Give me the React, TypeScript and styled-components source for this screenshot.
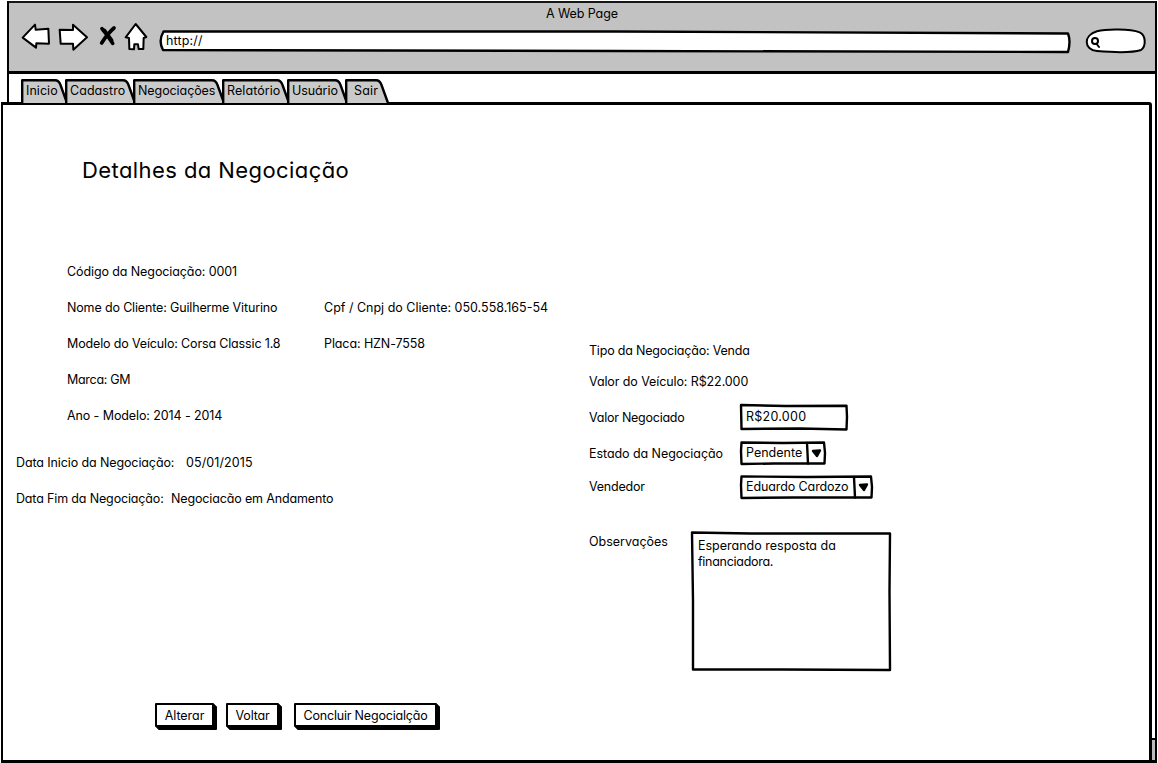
import React from "react";
import styled, { createGlobalStyle } from "styled-components";

const GlobalStyle = createGlobalStyle`
  * { box-sizing: border-box; }
  body {
    margin: 0;
    overflow: hidden;
    background: #fff;
    color: #000;
    font-family: Inter, "Open Sans", sans-serif;
    font-feature-settings: "cv11" 1;
    font-size: 12.5px;
    font-weight: 400;
    line-height: 16px;
  }
`;

const Page = styled.main`
  display: flex;
  flex-direction: column;
  width: 1158px;
  height: 763px;
  padding-top: 1px;
`;

const Text = styled.span<{ $track?: number }>`
  white-space: pre;
  letter-spacing: ${(p) => p.$track ?? 0}px;
`;

/* Browser chrome */

const Chrome = styled.header`
  display: flex;
  flex-direction: column;
  width: 1150px;
  height: 73px;
  margin-left: 7px;
  background: #c2c2c2;
  border: 2px solid #000;
  border-top-color: #161616;
  border-bottom-width: 3px;
`;

const WindowTitle = styled.div`
  height: 17px;
  padding: 3px 0 0;
  text-align: center;
`;

const Toolbar = styled.div`
  display: flex;
  height: 36px;
`;

const Glyph = styled.svg`
  display: block;
  flex: none;
  overflow: visible;
  fill: #fff;
  stroke: #000;
  stroke-width: 6;
  stroke-linejoin: round;
  stroke-linecap: round;
`;

const AddressBar = styled.div`
  position: relative;
  width: 910px;
  height: 24px;
  margin: 7px 11px 0 6px;
  padding: 6px 0 0 6px;
`;

const Outline = styled.svg`
  position: absolute;
  inset: 0;
  width: 100%;
  height: 100%;
  fill: #fff;
  stroke: #000;
  stroke-width: 2.4;
  stroke-linejoin: round;
  stroke-linecap: round;
  overflow: visible;
`;

const Over = styled(Text)`
  position: relative;
`;

/* Tabs */

const TabBar = styled.nav`
  display: flex;
  width: 1150px;
  height: 28px;
  margin-left: 7px;
  padding: 5px 0 0 12px;
  border: solid #000;
  border-width: 0 2px;
`;

const TabItem = styled.div<{ $w: number; $pad: number }>`
  position: relative;
  flex: none;
  width: ${(p) => p.$w}px;
  height: 24px;
  padding: 4px 0 0 ${(p) => p.$pad}px;
`;

/* Content */

const Body = styled.div`
  display: flex;
  width: 1157px;
  height: 661px;
  padding-left: 1px;
  border-right: 2px solid #000;
`;

const Panel = styled.section`
  display: flex;
  width: 1151px;
  height: 661px;
  background: #fff;
  border: solid #000;
  border-width: 3px 3px 3px 2px;
  border-radius: 0 3px 0 0;
`;

const ScrollTrack = styled.div`
  display: flex;
  flex-direction: column;
  justify-content: flex-end;
  width: 3px;
`;

const ScrollButton = styled.div`
  height: 25px;
  background: #bbb;
  border-top: 2px solid #000;
  border-bottom: 3px solid #000;
`;

const Details = styled.div`
  width: 586px;
  padding-top: 50px;
`;

const Heading = styled.h1`
  margin: 0 0 69px 79px;
  font-size: 22px;
  font-weight: 400;
  line-height: 30px;
  letter-spacing: 0.42px;
`;

const DetailRow = styled.div<{ $indent: number; $first?: number }>`
  display: grid;
  grid-template-columns: ${(p) => p.$first ?? 257}px auto;
  align-items: center;
  height: 36px;
  margin-left: ${(p) => p.$indent}px;
`;

const Dates = styled.div`
  margin-top: 11px;
`;

const Actions = styled.div`
  display: flex;
  margin: 186px 0 0 152px;
`;

const Button = styled.button<{ $w: number; $gap: number }>`
  width: ${(p) => p.$w}px;
  height: 24px;
  margin-right: ${(p) => p.$gap}px;
  padding: 2px 0 0;
  background: #fff;
  border: 2.4px solid #000;
  border-radius: 1px;
  box-shadow: 1px 1px 0 #000, 2px 2px 0 #000, 3px 3px 0 #000;
  color: #000;
  font: inherit;
  font-feature-settings: inherit;
  line-height: 18px;
`;

const Form = styled.div`
  padding-top: 230px;
`;

const Field = styled.div<{ $h: number }>`
  display: grid;
  grid-template-columns: 151px auto;
  align-items: center;
  height: ${(p) => p.$h}px;
`;

const FieldLabel = styled(Text)<{ $drop?: number }>`
  padding-top: ${(p) => p.$drop ?? 0}px;
`;

const NoteField = styled.div`
  display: grid;
  grid-template-columns: 102px auto;
  margin-top: 27px;
`;

const NoteLabel = styled.div`
  padding-top: 3px;
`;

const Control = styled.div<{ $w: number; $h: number; $top?: number }>`
  position: relative;
  width: ${(p) => p.$w}px;
  height: ${(p) => p.$h}px;
  padding: ${(p) => p.$top ?? 4}px 6px 0;
`;

const NoteLines = styled.div`
  position: relative;
  display: flex;
  flex-direction: column;
  padding: 3px 0 0 1px;
`;

const Select = ({ w, label, track }: { w: number; label: string; track: number }) => (
  <Control $w={w} $h={24}>
    <Outline>
      <path d={`M1.5 1.5 L${w * 0.5} 2 L${w - 2} 1.5 L${w - 1} 12 L${w - 1.5} 22.5 L${w * 0.4} 22.5 L1.5 23 L1 10 Z`} />
      <path d={`M${w - 19} 2 L${w - 18} 22.5`} />
      <path d={`M${w - 13} 10 L${w - 6} 9.5 L${w - 9} 15 Z`} fill="#000" />
    </Outline>
    <Over $track={track}>{label}</Over>
  </Control>
);

const tabs = [
  { label: "Inicio", w: 44, pad: 5, track: 0.04, last: false },
  { label: "Cadastro", w: 68, pad: 5, track: 0.06, last: false },
  { label: "Negociações", w: 89, pad: 5, track: -0.08, last: false },
  { label: "Relatório", w: 65, pad: 5, track: 0.08, last: false },
  { label: "Usuário", w: 58, pad: 5, track: -0.08, last: false },
  { label: "Sair", w: 43, pad: 9, track: 0.2, last: true },
];

const Tab = ({ label, w, pad, track, last }: (typeof tabs)[number]) => {
  const e = last ? w : w + 2;
  return (
    <TabItem $w={w} $pad={pad}>
      <Outline style={{ fill: "#cacaca" }}>
        <path d={`M1.2 24 V1.2 H${e - 12} Q${e - 8} 1.2 ${e - 6.5} 6 L${e} 24`} />
      </Outline>
      <Over $track={track}>{label}</Over>
    </TabItem>
  );
};

export default function App() {
  return (
    <>
      <GlobalStyle />
      <Page>
        <Chrome>
          <WindowTitle>
            <Text $track={-0.1}>A Web Page</Text>
          </WindowTitle>
          <Toolbar>
            <Glyph width="36" height="32" viewBox="27 60 108 96">
              <path d="M68 113 L105 74 L107 89 L145 86 L147 131 L109 130 L108 143 Z" />
            </Glyph>
            <Glyph width="45" height="32" viewBox="135 60 135 96">
              <path d="M179 89 L219 90 L219 74 L261 112 L220 149 L219 131 L182 131 Z" />
            </Glyph>
            <Glyph width="33" height="32" viewBox="270 60 99 96">
              <g strokeWidth="11">
                <path d="M306 86 Q322 103 338 130" />
                <path d="M342 84 Q324 99 305 129" />
                <path d="M313 91 L335 121" />
              </g>
            </Glyph>
            <Glyph width="31" height="32" viewBox="369 60 93 96">
              <path d="M377 112 L407 72 L439 111 L431 114 L430 147 L416 147 L414 133 L403 133 L402 148 L388 147 L387 114 Z" />
            </Glyph>
            <AddressBar>
              <Outline>
                <path d="M3.5 4.5 H455 L908 6.5 Q911 14 908 25 L455 24 L3 23 Q-2 14 3.5 4.5 Z" />
              </Outline>
              <Over $track={0.15}>http://</Over>
            </AddressBar>
            <Glyph width="66" height="32" viewBox="122 60 198 96">
              <path d="M170 94 C200 86 270 87 298 97 C318 106 317 140 302 150 C280 157 230 158 170 153 C130 149 128 106 170 94 Z" />
              <circle cx="164" cy="123" r="9" />
              <path d="M169 132 L176 141" />
            </Glyph>
          </Toolbar>
        </Chrome>
        <TabBar>
          {tabs.map((t) => (
            <Tab key={t.label} {...t} />
          ))}
        </TabBar>
        <Body>
          <Panel>
            <Details>
              <Heading>Detalhes da Negociação</Heading>
              <DetailRow $indent={64}>
                <Text $track={-0.1}>Código da Negociação: 0001</Text>
              </DetailRow>
              <DetailRow $indent={64}>
                <Text $track={-0.15}>Nome do Cliente: Guilherme Viturino</Text>
                <Text $track={0}>Cpf / Cnpj do Cliente: 050.558.165-54</Text>
              </DetailRow>
              <DetailRow $indent={64}>
                <Text $track={-0.15}>Modelo do Veículo: Corsa Classic 1.8</Text>
                <Text $track={-0.1}>Placa: HZN-7558</Text>
              </DetailRow>
              <DetailRow $indent={64}>
                <Text $track={-0.3}>Marca: GM</Text>
              </DetailRow>
              <DetailRow $indent={64}>
                <Text $track={-0.1}>Ano - Modelo: 2014 - 2014</Text>
              </DetailRow>
              <Dates>
                <DetailRow $indent={13} $first={170}>
                  <Text $track={-0.11}>Data Inicio da Negociação:</Text>
                  <Text $track={0.1}>05/01/2015</Text>
                </DetailRow>
                <DetailRow $indent={13} $first={155}>
                  <Text $track={-0.15}>Data Fim da Negociação:</Text>
                  <Text $track={-0.14}>Negociacão em Andamento</Text>
                </DetailRow>
              </Dates>
              <Actions>
                <Button $w={59} $gap={12}>
                  <Text $track={-0.05}>Alterar</Text>
                </Button>
                <Button $w={53} $gap={15}>
                  <Text $track={-0.2}>Voltar</Text>
                </Button>
                <Button $w={143} $gap={0}>
                  <Text $track={-0.19}>Concluir Negocialção</Text>
                </Button>
              </Actions>
            </Details>
            <Form>
              <Field $h={31}>
                <FieldLabel $track={-0.2}>Tipo da Negociação: Venda</FieldLabel>
              </Field>
              <Field $h={31}>
                <FieldLabel $track={-0.1}>Valor do Veículo: R$22.000</FieldLabel>
              </Field>
              <Field $h={40}>
                <FieldLabel $track={-0.25} $drop={2}>Valor Negociado</FieldLabel>
                <Control $w={108} $h={26} $top={5}>
                  <Outline>
                    <path d="M1 1 L45 2 L106.5 1.8 L107 13 L106.5 25.5 L60 24.5 L1.5 25 Z" />
                  </Outline>
                  <Over $track={0.26}>R$20.000</Over>
                </Control>
              </Field>
              <Field $h={32}>
                <FieldLabel $track={-0.06} $drop={1}>Estado da Negociação</FieldLabel>
                <Select w={86} label="Pendente" track={0} />
              </Field>
              <Field $h={35}>
                <FieldLabel $track={-0.23} $drop={1}>Vendedor</FieldLabel>
                <Select w={133} label="Eduardo Cardozo" track={-0.1} />
              </Field>
              <NoteField>
                <NoteLabel>
                  <Text $track={0}>Observações</Text>
                </NoteLabel>
                <Control $w={200} $h={140}>
                  <Outline>
                    <path d="M1 1.5 L60 2.5 L199 2.5 L198.5 60 L199 139 L90 138.5 L2 138.5 L2 70 Z" />
                  </Outline>
                  <NoteLines>
                    <Text $track={0}>Esperando resposta da</Text>
                    <Text $track={-0.28}>financiadora.</Text>
                  </NoteLines>
                </Control>
              </NoteField>
            </Form>
          </Panel>
          <ScrollTrack>
            <ScrollButton />
          </ScrollTrack>
        </Body>
      </Page>
    </>
  );
}
